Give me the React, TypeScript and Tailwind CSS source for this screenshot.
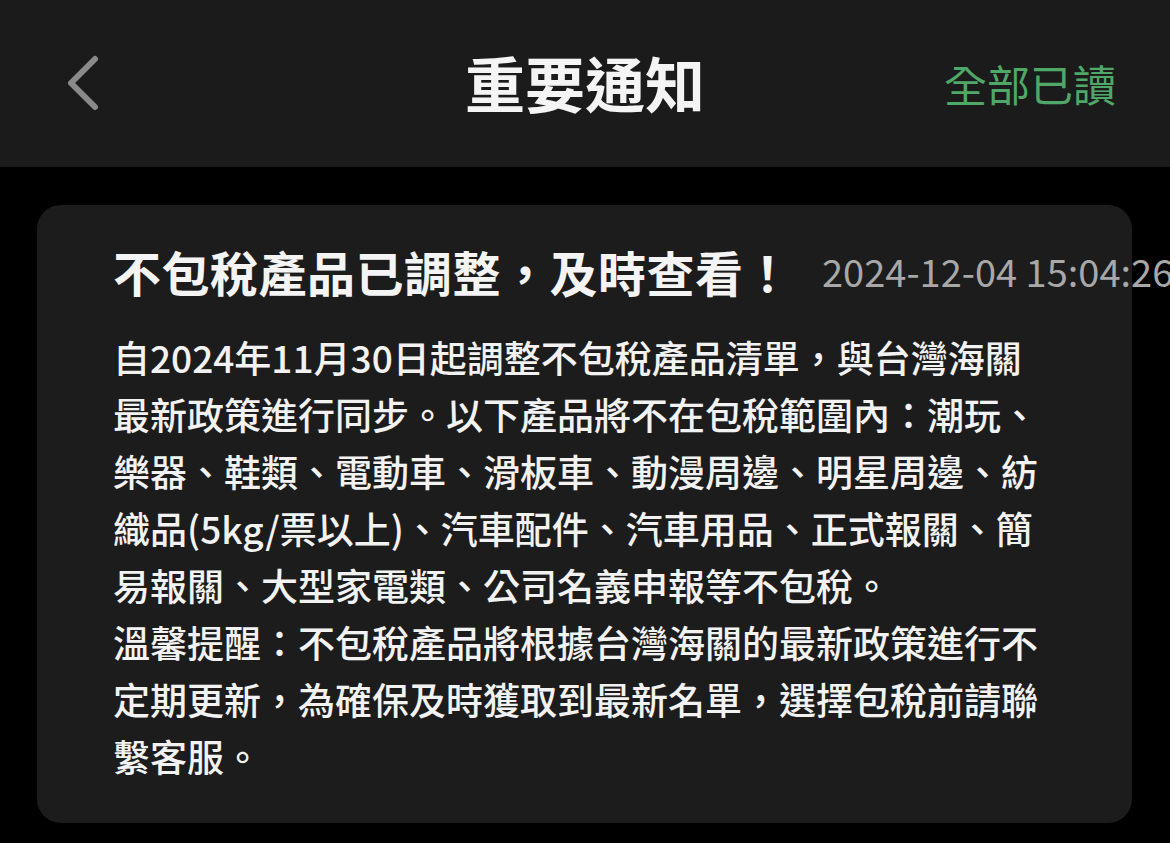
const FONT = { fontFamily: '"Noto Sans CJK TC", "Noto Sans", sans-serif' }

const bodyLines = [
  '自2024年11月30日起調整不包稅產品清單，與台灣海關',
  '最新政策進行同步。以下產品將不在包稅範圍內：潮玩、',
  '樂器、鞋類、電動車、滑板車、動漫周邊、明星周邊、紡',
  '織品(5kg/票以上)、汽車配件、汽車用品、正式報關、簡',
  '易報關、大型家電類、公司名義申報等不包稅。',
  '溫馨提醒：不包稅產品將根據台灣海關的最新政策進行不',
  '定期更新，為確保及時獲取到最新名單，選擇包稅前請聯',
  '繫客服。',
]

function BackIcon() {
  return (
    <svg width="40" height="60" viewBox="0 0 40 60" fill="none">
      <polyline
        points="29,5 5,29 29,53"
        stroke="#8a8a8a"
        strokeWidth="6"
        strokeLinecap="round"
        strokeLinejoin="round"
      />
    </svg>
  )
}

export default function App() {
  return (
    <div className="w-[1170px] h-[843px] bg-black overflow-hidden" style={FONT}>
      <header className="h-[167px] bg-[#1b1b1b] grid grid-cols-[1fr_auto_1fr] items-center">
        <div className="pl-[66px] flex items-center">
          <BackIcon />
        </div>
        <h1 className="text-[60px] font-bold text-[#f4f4f4] leading-none -mt-[4px]">重要通知</h1>
        <div className="flex justify-end pr-[54px]">
          <span className="text-[43px] text-[#4fa868] leading-none">全部已讀</span>
        </div>
      </header>

      <div className="mt-[38px] ml-[37px] w-[1095px] bg-[#1c1c1c] rounded-[24px] pt-[34px] pb-[38px] pl-[76px]">
        <div className="flex items-center whitespace-nowrap">
          <h2 className="text-[48px] font-bold text-[#f4f4f4] leading-[64px] tracking-[0.5px]">不包稅產品已調整，及時查看！</h2>
          <span className="ml-[30px] text-[38px] text-[#a8a8a8] leading-[64px] shrink-0">2024-12-04 15:04:26</span>
        </div>
        <div className="mt-[26px] text-[37px] font-medium text-[#f2f2f2] leading-[57px] whitespace-nowrap">
          {bodyLines.map((line) => (
            <div key={line}>{line}</div>
          ))}
        </div>
      </div>
    </div>
  )
}
